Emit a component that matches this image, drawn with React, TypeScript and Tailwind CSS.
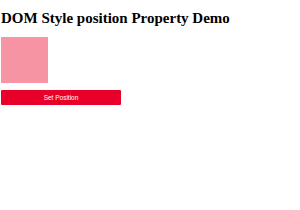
export default function App() {
  return (
    <div className="pl-[1px] pt-[10px] bg-white min-h-screen">
      <h1
        className="m-0 text-[15px] leading-[17px] font-bold text-black"
        style={{ fontFamily: '"Liberation Serif", serif' }}
      >
        DOM Style position Property Demo
      </h1>
      <div className="mt-[10px] w-[47px] h-[46px] bg-[#f794a4]" />
      <button
        className="mt-[7px] w-[120px] h-[15px] bg-[#e8002b] text-white text-[6.5px] rounded-[1px] flex items-center justify-center"
        style={{ fontFamily: '"Liberation Sans", sans-serif' }}
      >
        Set Position
      </button>
    </div>
  )
}
